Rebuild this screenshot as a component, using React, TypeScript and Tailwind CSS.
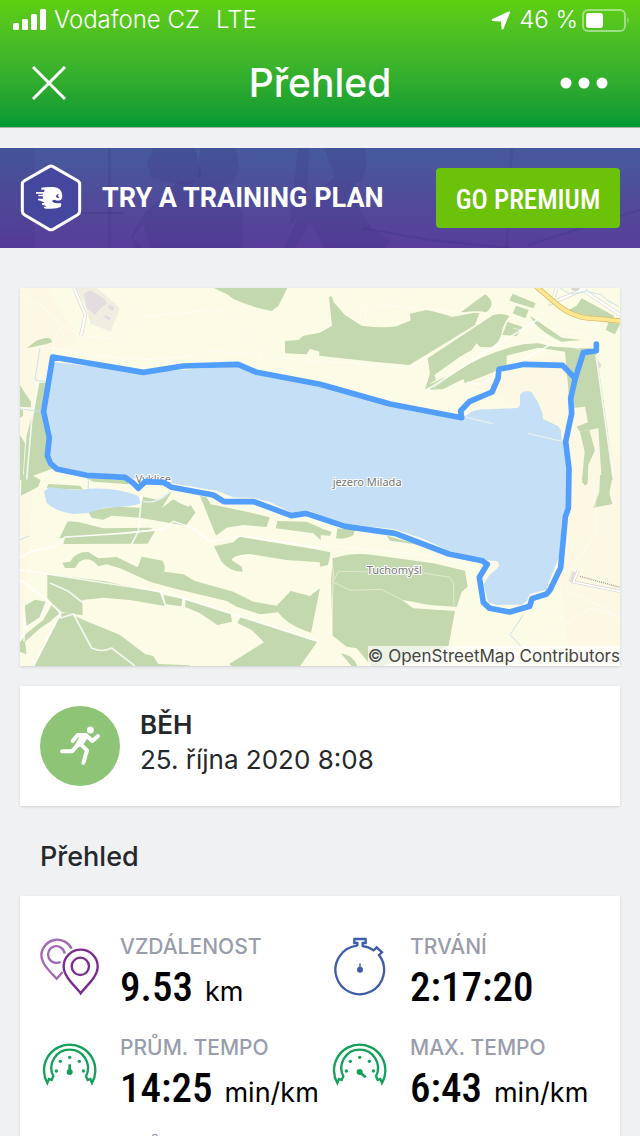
import React from 'react';

type IconName = 'distance' | 'duration' | 'avgPace' | 'maxPace';

type Stat = {
  label: string;
  value: string;
  unit?: string;
  icon: IconName;
};

const stats: Stat[] = [
  { label: 'VZDÁLENOST', value: '9.53', unit: 'km', icon: 'distance' },
  { label: 'TRVÁNÍ', value: '2:17:20', icon: 'duration' },
  { label: 'PRŮM. TEMPO', value: '14:25', unit: 'min/km', icon: 'avgPace' },
  { label: 'MAX. TEMPO', value: '6:43', unit: 'min/km', icon: 'maxPace' },
  { label: 'PRŮM. RYCHLOST', value: '4.16', unit: 'km/h', icon: 'avgPace' },
  { label: 'MAX. RYCHLOST', value: '8.93', unit: 'km/h', icon: 'maxPace' },
];

const route =
  'M1729 168V188L1690 194L1665 274L1652 331L1655 376L1637 461L1647 541L1645 661L1636 686L1622 839L1590 906L1580 918L1536 932L1529 955L1469 972L1409 961L1390 943L1378 868L1402 829L1386 818L1287 798L1125 736L975 715L900 690L858 676L814 683L702 641H612L580 621L455 598L430 583L375 581L355 601L337 583L315 568L200 562L110 543L92 526L82 503L88 448L71 371L98 207L370 253L490 234L654 229L710 253L900 289L1110 348L1325 389L1322 368L1348 341L1416 312L1434 271L1437 244L1512 229L1628 232L1665 271';

function StatusBar() {
  return (
    <div className="flex h-10 items-center justify-between pl-3 pr-2.5 text-2xl font-light">
      <div className="flex items-center">
        <svg className="h-[22px] w-[34px]" viewBox="0 0 34 22" fill="currentColor" aria-hidden="true">
          <rect x="1" y="14" width="6" height="7" rx="1.5" />
          <rect x="10" y="10" width="6" height="11" rx="1.5" />
          <rect x="19" y="5" width="6" height="16" rx="1.5" />
          <rect x="28" y="0" width="6" height="21" rx="1.5" />
        </svg>
        <span className="ml-2">Vodafone CZ</span>
        <span className="ml-4">LTE</span>
      </div>
      <div className="flex items-center">
        <svg className="mr-2 size-5" viewBox="0 0 20 20" fill="currentColor" aria-hidden="true">
          <path d="M19 2.5L12.5 19Q11.3 20.6 10.6 19L10 11.5L1.5 11Q-.3 10 1.5 9L17.5 1.5Q19.5 1 19 2.5Z" />
        </svg>
        <span>46 %</span>
        <svg className="ml-1 h-6 w-12" viewBox="0 0 48 24" aria-hidden="true">
          <rect x="1" y="2" width="42" height="21" rx="5" fill="none" stroke="#fff" strokeOpacity=".45" strokeWidth="2" />
          <rect x="4" y="5" width="17" height="15" rx="3" fill="#fff" />
          <path d="M45.5 9Q48 12 45.5 16Z" fill="#fff" fillOpacity=".5" />
        </svg>
      </div>
    </div>
  );
}

function PremiumBanner() {
  return (
    <section className="relative mt-5 flex h-[100px] items-center overflow-hidden bg-linear-to-b from-[#455a9c] to-[#583d99] px-5 text-white">
      {/* faded runners in the background */}
      <svg className="absolute inset-0 size-full" viewBox="0 0 640 100" preserveAspectRatio="xMidYMid slice" fill="#34297b" aria-hidden="true">
        <g fillOpacity=".14">
          <path d="M0 0H35V100H0Z" fillOpacity=".1" />
          <path d="M153 0H195L202 28L188 38L151 30L147 15Z" fillOpacity=".15" />
          <path d="M200 0H236L239 20L233 35L224 37L229 48L243 65V100H150L143 75L133 90L143 100H135L131 88L145 65L178 34L198 32Z" />
          <path d="M324 0H365L366 20L361 34L354 35L358 58L371 80L390 92L385 100H325L310 75L295 100H284L303 58L335 28Z" />
          <path d="M108 0H111V100H108ZM298 0H309L307 55L290 78ZM510 0H513L508 100H505Z" />
        </g>
        <path d="M58 65H124M362 80L430 92L510 100M528 97L640 62" fill="none" stroke="#34297b" strokeOpacity=".2" strokeWidth="2" />
      </svg>
      <div className="relative flex flex-1 items-center">
        <svg className="h-[68px] w-[62px]" viewBox="0 0 186 204" aria-hidden="true">
          <path d="M93 6Q96 6 99 8L173 50Q179 54 179 60V142Q179 148 173 152L99 196Q93 199 87 196L13 152Q7 148 7 142V60Q7 54 13 50L87 8Q90 6 93 6Z" fill="#44479d" stroke="#fff" strokeWidth="9" />
          <path
            d="M64 71Q80 68 100 69Q126 70 127 96Q127 103 123 108Q112 112 104 107Q94 108 98 114Q106 120 122 117Q126 120 122 129Q108 136 80 134Q68 133 72 128H80Q76 123 66 122V117H74Q70 112 54 109V104H70L68 97H55V92H68L70 89H48V84H72L74 77H64Z"
            fill="#fff"
          />
          <path d="M118 91Q110 89 108 95Q108 102 114 102Q119 101 118 98L114 97L114 94Z" fill="#44479d" />
        </svg>
        <p className="ml-5 whitespace-nowrap font-[Roboto] text-[27px] font-bold">TRY A TRAINING PLAN</p>
      </div>
      <button
        type="button"
        className="relative h-[60px] w-[184px] whitespace-nowrap rounded bg-[#6cc208] pt-1 font-['Roboto_Condensed','Liberation_Sans_Narrow',Roboto,sans-serif] text-[27px] font-medium"
      >
        GO PREMIUM
      </button>
    </section>
  );
}

function RouteMap() {
  return (
    <section className="relative mt-10 shadow-sm">
      <svg className="block w-full" viewBox="0 0 1800 1134" role="img" aria-label="Mapa trasy">
        <path d="M0 0H1800V1134H0Z" fill="#fcfbe5" />
        <path d="M0 0H80L180 160L95 190L50 420L0 1134ZM1300 260L1630 200L1800 520V1134H1650L1620 860L1640 430Z" fill="#fdf7e4" fillOpacity=".8" />

        {/* built-up area */}
        <path d="M165 0H230L300 60L272 131L212 108L195 50Z" fill="#f0eee0" />
        <path d="M192 18L210 6L250 30L262 46L242 60L225 81L200 60ZM255 80L273 90L268 97L252 88ZM268 49L284 58L278 69L264 60ZM1734 215L1744 230L1740 242L1733 236ZM1655 848L1667 852L1657 884L1645 880Z" fill="#e3dde0" />

        {/* woods, north-west */}
        <g transform="translate(0 -9)" fill="#c3d8ae">
          <path d="M582 9L625 30L640 42Q690 65 755 78L775 62L802 9Z" />
          <path d="M20 190L45 170Q75 155 92 161L97 171L80 177Z" />
          <path d="M795 168L835 165L850 152L900 143V200L870 192L860 208L795 205Z" />
          <path d="M55 293H80L66 380L85 455L78 520L100 550L35 574L45 585H10L20 450L40 380Z" />
          <path d="M0 300L15 325L33 350V367L0 365ZM0 370L9 378V392L0 398ZM0 450L15 475L8 585H0Z" />
        </g>

        {/* woods, north-east */}
        <g transform="translate(900 -9)" fill="#c3d8ae">
          <path d="M-2 144L36 122L27 38Q35 25 40 50L75 90L125 122Q190 130 230 124L272 106L269 86L320 75Q370 85 395 96L460 84H478L465 120L268 240L160 230L-2 212Z" />
          <path d="M422 82L495 28Q515 40 515 58Q510 75 498 82Q480 75 422 82Z" />
          <path d="M323 220L520 90Q550 82 568 94Q548 120 545 145Q535 180 510 187L480 186L470 175L455 195L420 215L343 270L348 285Q325 295 330 305L315 314L330 265Z" />
          <path d="M325 300L400 265Q500 200 610 178L655 175L700 185L780 190H828L862 430L880 585H845L835 430L780 440L770 425L804 412L795 365L750 370L735 200L655 188L560 212V238L520 262L435 295L430 282L370 312L332 314Z" />
          <path d="M578 26L647 55L640 70L568 47ZM588 62L626 75L616 100L578 85ZM562 110L608 126L590 153L547 150Z" />
          <path d="M630 92L725 158L783 165L725 170Q650 135 630 92Z" />
          <path d="M785 40L882 92L878 104Q780 105 740 78L770 62ZM866 110L900 118L885 148L857 135Z" />
          <path d="M780 440L808 435L825 495L805 540L803 585H786L794 500Z" />
        </g>

        {/* woods, south-west */}
        <g transform="translate(0 561)" fill="#c3d8ae">
          <path d="M5 0H35L62 15L55 35L3 62Z" />
          <path d="M85 27L180 32L190 44L80 40ZM200 10L325 16V28L220 20Z" />
          <path d="M205 112L240 102L290 95L360 98L370 65L415 75L440 60L455 50L425 100L460 73L480 85L505 95L512 90L526 113L497 152L360 128L275 122L250 134L215 128Z" />
          <path d="M143 139L175 141L250 160L390 158L400 163L350 168L118 190Z" />
          <path d="M135 188L405 168L383 206L130 207Z" />
          <path d="M540 63L560 67L572 88L680 110L749 127L740 156L670 150L620 158L588 182Z" />
          <path d="M772 138L860 140L902 158V195L880 175L767 160Z" />
          <path d="M582 214L640 202L658 185L902 226V262L800 255L690 237Q640 240 635 255L665 275L668 290Q630 290 605 260Z" />
          <path d="M127 263L150 260Q165 230 205 231L235 250L290 246L353 277L365 245L428 257L435 275L432 290L490 298L525 318L640 350L700 380L770 392L812 348L870 363L900 340L873 473Q800 450 775 412L720 418L650 395L620 378L460 340L390 320L300 280L260 268L235 274Q210 240 178 260L165 279H135Z" />
          <path d="M82 298L250 318L420 353L435 393L330 375L250 368L187 375L188 420L160 418L120 410L82 370Z" />
          <path d="M430 360L490 372L485 394L437 388ZM497 374L632 416L636 440L592 450L540 415L495 396ZM662 426L892 500L835 580H640L628 567L732 502L695 465L652 444Z" />
          <path d="M42 575L125 415Q145 410 175 428L300 480L375 537L400 543L415 567L510 571V575Z" />
          <path d="M14 392L45 374L80 380L60 430L20 455ZM95 390L118 415L90 440L60 460L15 500L20 538L0 530V500L20 475L70 435Z" />
        </g>

        {/* woods, south-east */}
        <g transform="translate(900 561)" fill="#c3d8ae">
          <path d="M-2 158L35 170L30 182L-2 180ZM52 160L105 165L100 180Q75 195 48 190ZM200 182L300 210L210 197ZM-2 226L32 232L24 270L0 275Z" />
          <path d="M38 250Q100 230 160 240L340 265L435 287L443 335L425 350L410 396L330 390L245 374L280 400L405 408L385 515L160 580L110 520L80 515L38 482L33 320Z" />
          <path d="M62 535Q100 540 112 573H95Z" />
          <path d="M790 0H803V25L795 32L786 20ZM840 0L878 2L868 55L877 87L820 98L838 50Z" />
        </g>

        {/* roads and paths */}
        <g fill="none" stroke="#fff" strokeLinejoin="round">
          <g strokeWidth="3" strokeOpacity=".6">
            <path d="M0 22L60 50L130 112L180 142L290 155Q300 120 370 85L400 84L590 64Q650 80 720 185V205L900 222L1030 226L1165 242L1230 200" />
            <path d="M0 185L100 180L250 205L380 215L510 205L560 188L720 200M130 112L100 150V205M230 0L310 30L365 70" />
            <path d="M945 0Q1010 60 1040 64Q1120 40 1200 0M1036 64V100M1090 53L1230 62L1330 74" />
            <path d="M1480 120L1570 145L1680 185M1560 70L1620 120L1715 150L1740 95M1670 100L1740 120M1240 300L1390 190L1465 170L1570 145" />
            <path d="M930 781L940 855L935 1030L900 1050M900 770L1200 800L1350 830M1615 1005L1500 1080L1420 1134M1720 560L1730 730L1660 840L1640 910L1760 960L1800 1010M1580 960L1640 1005L1710 960L1800 985" />
          </g>
          <g strokeWidth="5" strokeOpacity=".8">
            <path d="M0 845L80 858L430 912L660 985L895 1060M0 810L35 790L105 775L135 747L330 735L430 722L460 700L520 720L570 760L665 744L900 780" />
            <path d="M365 621L355 730L335 768M0 875L60 920L120 970L122 990L160 978L215 1080Q245 1095 275 1080L345 1134M80 940L60 990L15 1020L0 1060M12 950V1060M422 910L437 955M490 930L485 965" />
            <path d="M1340 282L1380 290L1590 170M1220 306L1560 90M1728 200L1780 575M20 575L35 400L58 270" />
            <path d="M122 975L40 1134M90 885L145 910L190 945" />
          </g>
          <path d="M370 640Q410 650 450 611" stroke="#e5edf0" strokeWidth="5" />
        </g>
        <path d="M940 880L955 850L1210 855L1290 868L1300 885L1302 955M935 880L990 907L1085 904L1145 935" fill="none" stroke="#e2e9cf" strokeWidth="3" />
        <path d="M162 0L196 80L183 142M1700 0L1595 45L1610 0M1680 0L1800 80M1655 0L1690 10" fill="none" stroke="#dad8d3" strokeWidth="11" />
        <path d="M162 0L196 80L183 142M1700 0L1595 45L1610 0M1680 0L1800 80" fill="none" stroke="#fff" strokeWidth="7" />
        <path d="M1548 -5L1610 48Q1660 92 1730 92L1800 99" fill="none" stroke="#d8be68" strokeWidth="16" />
        <path d="M1548 -5L1610 48Q1660 92 1730 92L1800 99" fill="none" stroke="#ffe691" strokeWidth="11" />
        <path d="M1675 848L1660 882L1800 910" fill="none" stroke="#d6d4d0" strokeWidth="9" />
        <path d="M1675 848L1660 882L1800 910" fill="none" stroke="#fff" strokeWidth="5" />
        <path d="M1680 865L1800 898" fill="none" stroke="#777" strokeWidth="4" strokeDasharray="2 4" />

        {/* water */}
        <g fill="#c5dff6">
          <path d="M102 222L370 253L654 235L900 289L1110 348L1325 389L1342 380Q1360 362 1410 364L1490 360Q1500 358 1500 348V320Q1512 305 1535 312L1555 345L1565 370L1570 393L1615 415L1623 425L1625 457L1637 461L1647 541L1645 661L1625 700L1620 800L1585 886L1582 905L1530 917L1520 940L1505 950L1430 951L1405 942L1390 890L1408 862L1432 841Q1441 830 1432 820L1395 815L1287 788L1210 752L1125 724L975 707L860 666L815 674L750 642L702 630L640 628L590 608L455 586L190 552L110 535L88 500L96 440L80 371Z" />
          <path d="M72 610L90 598Q140 605 180 606Q270 592 355 624L362 645Q350 655 250 660L205 675L160 678Q110 672 80 645Z" />
        </g>
        <path d="M60 180L45 275L80 282M0 363L60 370M0 755L28 744M205 560L205 605M1510 980L1470 1040L1515 1088M1620 0L1650 18L1700 10L1745 20L1760 36L1795 55" fill="none" stroke="#c9e2ec" strokeWidth="3" />
        <path d="M1335 387L1418 407M1522 436L1625 460" fill="none" stroke="#f1f2e6" strokeWidth="3" />

        <g fontFamily="Noto Sans, sans-serif" fontSize="33" fill="#777" stroke="#fff" strokeWidth="6" paintOrder="stroke" strokeLinejoin="round">
          <text x="347" y="586">Vyklice</text>
          <text x="938" y="594">jezero Milada</text>
          <text x="1040" y="857">Tuchomyšl</text>
        </g>

        <path d={route} fill="none" stroke="#519eff" strokeWidth="17" strokeLinejoin="round" strokeLinecap="round" />
      </svg>
      <p className="absolute bottom-0 right-0 whitespace-nowrap bg-white/70 text-[17px] leading-5 text-[#444]">
        © OpenStreetMap Contributors
      </p>
    </section>
  );
}

function RunIcon() {
  return (
    <svg className="size-20 rounded-full bg-[#8dc476]" viewBox="0 0 240 240" fill="none" stroke="#fff" strokeWidth="12" strokeLinecap="round" strokeLinejoin="round" aria-hidden="true">
      <circle cx="151" cy="72" r="10.5" fill="#fff" stroke="none" />
      <path d="M98 105L113 87H138L157 105L174 90" />
      <path d="M66 136H96L114 116" />
      <path d="M120 113L141 133L130 171" />
      <path d="M126 87L142 90L124 118L108 120Z" fill="#fff" strokeWidth="8" />
    </svg>
  );
}

function StatIcon({ name }: { name: IconName }) {
  if (name === 'distance') {
    return (
      <svg className="size-[60px]" viewBox="0 0 180 180" fill="none" strokeWidth="7" aria-hidden="true">
        <g stroke="#a36bb3">
          <path d="M95 38A48 48 0 0 0 4 56C4 83 31 108 50 128L68 108" />
          <path d="M74 53A25 25 0 1 0 62 77" />
        </g>
        <g stroke="#7a2b90">
          <path d="M122 172C110 154 71 124 71 92A51 51 0 0 1 173 92C173 124 134 154 122 172Z" />
          <circle cx="121" cy="91" r="26" />
        </g>
      </svg>
    );
  }

  if (name === 'duration') {
    return (
      <svg className="size-[60px]" viewBox="0 0 180 180" fill="none" stroke="#3f5ca8" strokeWidth="7" aria-hidden="true">
        <path d="M82 30V21H73V9H107V21H98V30Q115 32 131 43L140 34L156 49L147 57A73 73 0 1 1 82 29" />
        <circle cx="90" cy="101" r="9" fill="#3f5ca8" stroke="none" />
        <path d="M90 101V82" strokeWidth="4" />
      </svg>
    );
  }

  return (
    <svg className="size-[60px]" viewBox="0 0 180 180" fill="none" stroke="#12a05a" strokeWidth="7" aria-hidden="true">
      <path d="M22 138A77 77 0 1 1 156 138L151 126L143 129L138 118A55 55 0 1 0 40 118L35 129L27 126Z" />
      <g fill="#12a05a" stroke="none">
        <circle cx="89" cy="61" r="5" />
        <circle cx="61" cy="73" r="5" />
        <circle cx="118" cy="73" r="5" />
        <circle cx="49" cy="102" r="5" />
        <circle cx="130" cy="102" r="5" />
        <circle cx="89" cy="105" r="9" />
      </g>
      <path d={name === 'avgPace' ? 'M89 105V82' : 'M89 105L107 121'} strokeWidth="8" />
    </svg>
  );
}

export default function App() {
  return (
    <div className="h-screen overflow-hidden bg-[#f0f1f3] font-[Inter,sans-serif] text-[#25282b]">
      <header className="border-b border-[#a9b3ab] bg-linear-to-b from-[#5fcf10] to-[#009934] text-white">
        <StatusBar />
        <div className="flex h-[87px] items-center justify-between px-8 pb-0.5">
          <button type="button" aria-label="Zavřít" className="w-12">
            <svg className="size-[34px]" viewBox="0 0 34 34" stroke="currentColor" strokeWidth="3" aria-hidden="true">
              <path d="M1 1L33 33M33 1L1 33" />
            </svg>
          </button>
          <h1 className="text-[39px] font-medium leading-none">Přehled</h1>
          <button type="button" aria-label="Další možnosti" className="w-12">
            <svg className="h-3 w-12" viewBox="0 0 48 12" fill="currentColor" aria-hidden="true">
              <circle cx="6" cy="6" r="5.5" />
              <circle cx="24" cy="6" r="5.5" />
              <circle cx="42" cy="6" r="5.5" />
            </svg>
          </button>
        </div>
      </header>

      <PremiumBanner />

      <main className="px-5">
        <RouteMap />

        <section className="mt-5 flex items-center gap-5 bg-white p-5 shadow-sm">
          <RunIcon />
          <div className="-mt-2 leading-[35px]">
            <h2 className="text-[26px] font-semibold">BĚH</h2>
            <p className="text-[26px]">25. října 2020 8:08</p>
          </div>
        </section>

        <h2 className="px-5 pb-5 pt-8 text-[27px] font-medium leading-[38px]">Přehled</h2>

        <dl className="grid grid-cols-2 gap-y-5 bg-white pb-10 pl-5 pt-9 shadow-sm">
          {stats.map(s => (
            <div key={s.label} className="flex gap-5">
              <div className="shrink-0 pt-1">
                <StatIcon name={s.icon} />
              </div>
              <div className="whitespace-nowrap">
                <dt className="text-[21px] font-medium leading-[30px] text-[#999dab]">{s.label}</dt>
                <dd className="text-black">
                  <span className="font-['Roboto_Condensed','Liberation_Sans_Narrow',Roboto,sans-serif] text-[41px] font-medium leading-[50px]">
                    {s.value}
                  </span>
                  {s.unit && <span className="ml-3 text-[27px]">{s.unit}</span>}
                </dd>
              </div>
            </div>
          ))}
        </dl>
      </main>
    </div>
  );
}
